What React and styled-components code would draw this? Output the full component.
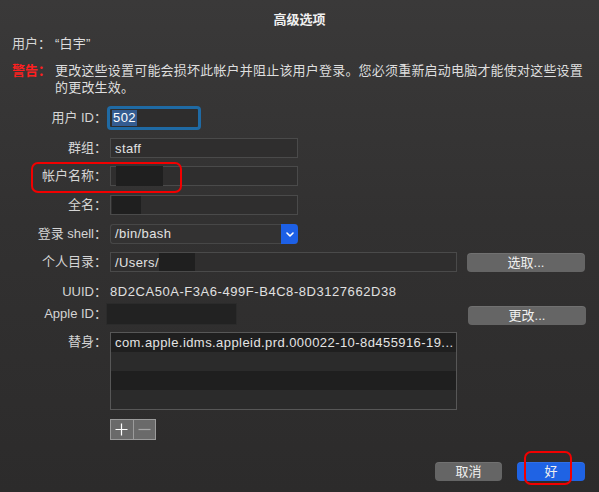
import styled, { createGlobalStyle } from "styled-components";

const GlobalStyle = createGlobalStyle`
  html, body {
    margin: 0;
    padding: 0;
    background: #2d2c2c;
  }
  body {
    font-family: "Liberation Sans", "Noto Sans CJK SC", sans-serif;
    -webkit-font-smoothing: antialiased;
  }
`;

const Window = styled.div`
  position: relative;
  width: 599px;
  height: 492px;
  overflow: hidden;
  background: linear-gradient(180deg, #3a3939 0%, #323131 45%, #2c2b2b 100%);
  color: #dcdcdc;
  font-size: 13px;
`;

const Title = styled.div`
  padding-top: 12px;
  height: 16px;
  line-height: 16px;
  text-align: center;
  font-weight: bold;
  color: #f0f0f0;
`;

const InfoRow = styled.div`
  display: grid;
  grid-template-columns: 43px 1fr;
  padding-left: 12px;
  margin-top: ${(p) => p.$top}px;
  line-height: ${(p) => p.$lh}px;
`;

const InfoLabel = styled.span`
  color: ${(p) => (p.$warn ? "#ff2020" : "#d6d6d6")};
  font-weight: ${(p) => (p.$warn ? "bold" : "normal")};
`;

const InfoText = styled.span`
  width: 535px;
  letter-spacing: 0.2px;
  color: #dedede;
`;

const Form = styled.div`
  display: flex;
  flex-direction: column;
  margin-top: 10px;
`;

const Row = styled.div`
  display: flex;
  align-items: ${(p) => (p.$top ? "flex-start" : "center")};
  margin-bottom: ${(p) => p.$gap}px;
`;

const Label = styled.div`
  flex: 0 0 107px;
  margin-right: 3px;
  text-align: right;
  color: #d4d4d4;
  line-height: 16px;
  white-space: nowrap;
`;

const Field = styled.div`
  box-sizing: border-box;
  flex: 0 0 ${(p) => p.$w}px;
  height: 20px;
  padding-left: ${(p) => p.$pl ?? 4}px;
  display: flex;
  align-items: center;
  background: #2f2e2e;
  border: 1px solid #4a4a4a;
  color: #e2e2e2;
  letter-spacing: 0.4px;
  white-space: nowrap;
`;

const FocusRing = styled.div`
  box-sizing: border-box;
  flex: 0 0 94px;
  height: 24px;
  margin-left: -3px;
  padding: 3px;
  border-radius: 4px;
  background: #1f6aa4;
  display: flex;
`;

const FocusInner = styled.div`
  flex: 1;
  display: flex;
  align-items: center;
  padding-left: 2px;
  background: #2e2d2d;
  border-radius: 1px;
`;

const Selected = styled.span`
  background: #345c91;
  color: #ffffff;
  padding: 0 1px;
  line-height: 16px;
  letter-spacing: 0.4px;
`;

const Redact = styled.span`
  display: inline-block;
  width: ${(p) => p.$w}px;
  height: ${(p) => p.$h}px;
  margin-left: ${(p) => p.$ml || 0}px;
  background: #1f1f1f;
`;

const Popup = styled.div`
  box-sizing: border-box;
  flex: 0 0 188px;
  height: 20px;
  display: flex;
  align-items: stretch;
  background: #333232;
  border: 1px solid #474747;
  border-right: none;
  border-radius: 3px;
  color: #e2e2e2;
`;

const PopupText = styled.span`
  flex: 1;
  padding-left: 4px;
  line-height: 18px;
  letter-spacing: 0.4px;
`;

const PopupArrow = styled.span`
  width: 17px;
  margin: -1px 0;
  background: #1d60e6;
  border-radius: 0 4px 4px 0;
  display: flex;
  align-items: center;
  justify-content: center;
`;

const Button = styled.button`
  box-sizing: border-box;
  flex: 0 0 ${(p) => p.$w}px;
  width: ${(p) => p.$w}px;
  height: 19px;
  margin: ${(p) => p.$mt || 0}px 0 0 ${(p) => p.$ml || 0}px;
  padding: 0;
  border: none;
  border-radius: 4px;
  background: ${(p) => (p.$primary ? "#1f63e4" : "#656565")};
  box-shadow: inset 0 1px 0 rgba(255, 255, 255, 0.08);
  color: #f0f0f0;
  font-family: inherit;
  font-size: 13px;
  line-height: 19px;
`;

const Value = styled.div`
  color: #e0e0e0;
  line-height: 16px;
  letter-spacing: 0.55px;
  white-space: nowrap;
`;

const DarkBox = styled.div`
  box-sizing: border-box;
  flex: 0 0 131px;
  height: 22px;
  margin-left: -4px;
  background: #222222;
  border: 1px solid #2b2b2b;
`;

const List = styled.div`
  box-sizing: border-box;
  flex: 0 0 347px;
  border: 1px solid #575757;
  background: #2a2a2a;
`;

const ListRow = styled.div`
  height: 19px;
  line-height: 19px;
  padding-left: 4px;
  background: ${(p) => (p.$dark ? "#1f1f1f" : "#2b2b2b")};
  color: #e4e4e4;
  letter-spacing: 0.43px;
  white-space: nowrap;
`;

const Segmented = styled.div`
  display: flex;
  box-sizing: border-box;
  margin-left: 110px;
  width: 46px;
  height: 21px;
  border: 1px solid #9b9b9b;
  background: #6a6a6a;
`;

const Seg = styled.span`
  flex: 1;
  display: flex;
  align-items: center;
  justify-content: center;
  & + & {
    border-left: 1px solid #9b9b9b;
  }
`;

const Footer = styled.div`
  display: flex;
  justify-content: flex-end;
  gap: 15px;
  padding-right: 14px;
  margin-top: 22px;
`;

const Highlight = styled.div`
  position: absolute;
  left: ${(p) => p.$x}px;
  top: ${(p) => p.$y}px;
  width: ${(p) => p.$w}px;
  height: ${(p) => p.$h}px;
  box-sizing: border-box;
  border: 2.5px solid #f20000;
  border-radius: 7px;
  pointer-events: none;
`;

function Chevron() {
  return (
    <svg width="8" height="5" viewBox="0 0 8 5">
      <path d="M1 1l3 3 3-3" fill="none" stroke="#fff" strokeWidth="1.6" strokeLinecap="round" strokeLinejoin="round" />
    </svg>
  );
}

export default function App() {
  return (
    <>
      <GlobalStyle />
      <Window>
        <Title>高级选项</Title>
        <InfoRow $top={8} $lh={16}>
          <InfoLabel>用户：</InfoLabel>
          <InfoText>“白宇”</InfoText>
        </InfoRow>
        <InfoRow $top={10} $lh={17}>
          <InfoLabel $warn>警告：</InfoLabel>
          <InfoText>
            更改这些设置可能会损坏此帐户并阻止该用户登录。您必须重新启动电脑才能使对这些设置的更改生效。
          </InfoText>
        </InfoRow>

        <Form>
          <Row $gap={8}>
            <Label>用户 ID：</Label>
            <FocusRing>
              <FocusInner>
                <Selected>502</Selected>
              </FocusInner>
            </FocusRing>
          </Row>
          <Row $gap={8}>
            <Label>群组：</Label>
            <Field $w={188}>staff</Field>
          </Row>
          <Row $gap={9}>
            <Label>帐户名称：</Label>
            <Field $w={188}>
              <Redact $w={47} $h={20} $ml={1} />
            </Field>
          </Row>
          <Row $gap={9}>
            <Label>全名：</Label>
            <Field $w={188} $pl={1}>
              <Redact $w={29} $h={18} />
            </Field>
          </Row>
          <Row $gap={8}>
            <Label>登录 shell：</Label>
            <Popup>
              <PopupText>/bin/bash</PopupText>
              <PopupArrow>
                <Chevron />
              </PopupArrow>
            </Popup>
          </Row>
          <Row $gap={12}>
            <Label>个人目录：</Label>
            <Field $w={347}>
              /Users/
              <Redact $w={36} $h={18} />
            </Field>
            <Button $w={118} $ml={10}>选取...</Button>
          </Row>
          <Row $gap={2}>
            <Label>UUID：</Label>
            <Value>8D2CA50A-F3A6-499F-B4C8-8D3127662D38</Value>
          </Row>
          <Row $gap={7}>
            <Label>Apple ID：</Label>
            <DarkBox />
            <Button $w={118} $ml={231} $mt={4}>更改...</Button>
          </Row>
          <Row $gap={9} $top>
            <Label style={{ marginTop: 2 }}>替身：</Label>
            <List>
              <ListRow $dark>com.apple.idms.appleid.prd.000022-10-8d455916-19...</ListRow>
              <ListRow />
              <ListRow $dark />
              <ListRow />
            </List>
          </Row>
          <Row $gap={0}>
            <Segmented>
              <Seg>
                <svg width="13" height="13" viewBox="0 0 13 13">
                  <path d="M6.5 0.5v12M0.5 6.5h12" stroke="#ffffff" strokeWidth="1.2" />
                </svg>
              </Seg>
              <Seg>
                <svg width="13" height="13" viewBox="0 0 13 13">
                  <path d="M0.5 6.5h12" stroke="#a8a8a8" strokeWidth="1.2" />
                </svg>
              </Seg>
            </Segmented>
          </Row>
        </Form>

        <Footer>
          <Button $w={67}>取消</Button>
          <Button $w={68} $primary>好</Button>
        </Footer>

        <Highlight $x={31} $y={162} $w={151} $h={31} />
        <Highlight $x={524} $y={451} $w={48} $h={34} />
      </Window>
    </>
  );
}
